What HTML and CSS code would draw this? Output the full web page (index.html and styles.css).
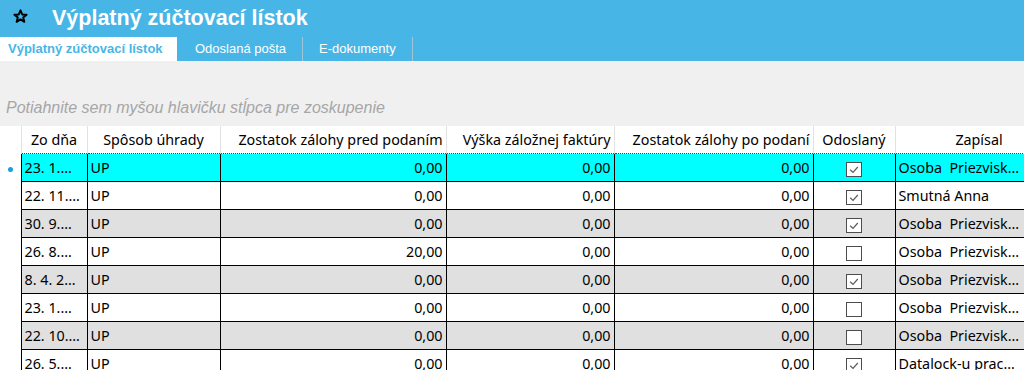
FILE: index.html
```html
<!DOCTYPE html>
<html lang="sk">
<head>
<meta charset="utf-8">
<title>Výplatný zúčtovací lístok</title>
<link rel="stylesheet" href="styles.css">
</head>
<body>
<div class="titlebar">
  <svg class="star" width="15" height="15" viewBox="0 0 14 14"><path d="M7 1.2 L8.6 5.1 L12.7 5.3 L9.5 7.9 L10.6 12 L7 9.7 L3.4 12 L4.5 7.9 L1.3 5.3 L5.4 5.1 Z" fill="none" stroke="#000" stroke-width="1.8" stroke-linejoin="round"/></svg>
  <h1 class="title">Výplatný zúčtovací lístok</h1>
</div>
<div class="tabs">
  <div class="tab active">Výplatný zúčtovací lístok</div>
  <div class="tab">Odoslaná pošta</div>
  <div class="tab">E-dokumenty</div>
</div>
<div class="grouparea">
  <div class="grouphint">Potiahnite sem myšou hlavičku stĺpca pre zoskupenie</div>
</div>
<table class="grid">
  <colgroup>
    <col class="c0"><col class="c1"><col class="c2"><col class="c3"><col class="c4"><col class="c5"><col class="c6"><col class="c7">
  </colgroup>
  <thead>
    <tr>
      <th class="ind"></th>
      <th class="center">Zo dňa</th>
      <th class="center">Spôsob úhrady</th>
      <th class="right">Zostatok zálohy pred podaním</th>
      <th class="right">Výška záložnej faktúry</th>
      <th class="right">Zostatok zálohy po podaní</th>
      <th class="center">Odoslaný</th>
      <th class="center">Zapísal</th>
    </tr>
  </thead>
  <tbody>
    <tr class="sel">
      <td class="ind"><span class="dot"></span></td>
      <td>23. 1.…</td><td>UP</td><td class="num">0,00</td><td class="num">0,00</td><td class="num">0,00</td>
      <td class="chk"><span class="box"><svg width="14" height="13" viewBox="0 0 14 13"><path d="M3.2 6.8 L6 9.4 L10.8 4" fill="none" stroke="#5a5a5a" stroke-width="1.2"/></svg></span></td><td>Osoba&nbsp; Priezvisk…</td>
    </tr>
    <tr>
      <td class="ind"></td>
      <td>22. 11.…</td><td>UP</td><td class="num">0,00</td><td class="num">0,00</td><td class="num">0,00</td>
      <td class="chk"><span class="box"><svg width="14" height="13" viewBox="0 0 14 13"><path d="M3.2 6.8 L6 9.4 L10.8 4" fill="none" stroke="#5a5a5a" stroke-width="1.2"/></svg></span></td><td>Smutná Anna</td>
    </tr>
    <tr class="alt">
      <td class="ind"></td>
      <td>30. 9.…</td><td>UP</td><td class="num">0,00</td><td class="num">0,00</td><td class="num">0,00</td>
      <td class="chk"><span class="box"><svg width="14" height="13" viewBox="0 0 14 13"><path d="M3.2 6.8 L6 9.4 L10.8 4" fill="none" stroke="#5a5a5a" stroke-width="1.2"/></svg></span></td><td>Osoba&nbsp; Priezvisk…</td>
    </tr>
    <tr>
      <td class="ind"></td>
      <td>26. 8.…</td><td>UP</td><td class="num">20,00</td><td class="num">0,00</td><td class="num">0,00</td>
      <td class="chk"><span class="box"></span></td><td>Osoba&nbsp; Priezvisk…</td>
    </tr>
    <tr class="alt">
      <td class="ind"></td>
      <td>8. 4. 2…</td><td>UP</td><td class="num">0,00</td><td class="num">0,00</td><td class="num">0,00</td>
      <td class="chk"><span class="box"><svg width="14" height="13" viewBox="0 0 14 13"><path d="M3.2 6.8 L6 9.4 L10.8 4" fill="none" stroke="#5a5a5a" stroke-width="1.2"/></svg></span></td><td>Osoba&nbsp; Priezvisk…</td>
    </tr>
    <tr>
      <td class="ind"></td>
      <td>23. 1.…</td><td>UP</td><td class="num">0,00</td><td class="num">0,00</td><td class="num">0,00</td>
      <td class="chk"><span class="box"></span></td><td>Osoba&nbsp; Priezvisk…</td>
    </tr>
    <tr class="alt">
      <td class="ind"></td>
      <td>22. 10.…</td><td>UP</td><td class="num">0,00</td><td class="num">0,00</td><td class="num">0,00</td>
      <td class="chk"><span class="box"></span></td><td>Osoba&nbsp; Priezvisk…</td>
    </tr>
    <tr>
      <td class="ind"></td>
      <td>26. 5.…</td><td>UP</td><td class="num">0,00</td><td class="num">0,00</td><td class="num">0,00</td>
      <td class="chk"><span class="box"><svg width="14" height="13" viewBox="0 0 14 13"><path d="M3.2 6.8 L6 9.4 L10.8 4" fill="none" stroke="#5a5a5a" stroke-width="1.2"/></svg></span></td><td>Datalock-u prac…</td>
    </tr>
  </tbody>
</table>
</body>
</html>
```
FILE: styles.css
```css
html, body {
  margin: 0;
  padding: 0;
  background: #ffffff;
  overflow: hidden;
  width: 1024px;
  height: 370px;
}
body {
  font-family: "Noto Sans", "DejaVu Sans", sans-serif;
}
.titlebar {
  height: 36px;
  background: #47b6e7;
  display: flex;
  align-items: center;
}
.star {
  margin-left: 13px;
  margin-top: -4px;
}
.title {
  margin: 0 0 0 24px;
  font-family: "Liberation Sans", "Arial", sans-serif;
  font-weight: bold;
  font-size: 21.5px;
  color: #ffffff;
  line-height: 36px;
}
.tabs {
  height: 25px;
  background: #47b6e7;
  display: flex;
  font-family: "Liberation Sans", "Arial", sans-serif;
  font-size: 13px;
  color: #ffffff;
}
.tab {
  height: 24px;
  margin-top: 1px;
  line-height: 24px;
  padding: 0 16px;
  white-space: nowrap;
  border-right: 1px solid #9fc6d8;
}
.tab.active {
  box-sizing: border-box;
  background: #ffffff;
  color: #47b6e7;
  font-weight: bold;
  padding: 0 0 0 8px;
  border-right: none;
  width: 177px;
}
.tab.active + .tab {
  padding-left: 18px;
  padding-right: 16px;
}
.grouparea {
  height: 65px;
  background: #f0f0f0;
  display: flex;
  align-items: flex-end;
}
.grouphint {
  font-family: "Liberation Sans", sans-serif;
  font-style: italic;
  font-size: 16px;
  color: #a6a6a6;
  padding: 0 0 9px 6px;
}
.grid {
  border-collapse: collapse;
  table-layout: fixed;
  width: 1063px;
  font-size: 14.3px;
  color: #000000;
}
.c0 { width: 21px; }
.c1 { width: 66px; }
.c2 { width: 133px; }
.c3 { width: 226px; }
.c4 { width: 168px; }
.c5 { width: 199px; }
.c6 { width: 82px; }
.c7 { width: 168px; }
.grid th {
  height: 27px;
  padding: 0 3px;
  font-weight: normal;
  background: #ffffff;
  border-right: 1px solid #e2e2e2;
  white-space: nowrap;
  overflow: hidden;
}
.center { text-align: center; }
.right { text-align: right; }
.grid td {
  height: 27px;
  padding: 0 3px;
  border: 1px solid #000000;
  white-space: nowrap;
  overflow: hidden;
}
.grid td.ind {
  border-top: none;
  border-bottom: none;
  border-left: none;
  background: #ffffff;
  padding: 0;
  text-align: center;
}
.grid td.num { text-align: right; }
.grid td.chk { text-align: center; padding: 0; }
.alt td { background: #e0e0e0; }
.sel td { background: #00ffff; border-top: 1px dotted #d00000; border-bottom: 1px dotted #d00000; }
.sel td.ind { background: #ffffff; border-top: none; border-bottom: none; }
.dot {
  display: inline-block;
  width: 5px;
  height: 5px;
  border-radius: 50%;
  background: #1a9fdc;
  vertical-align: middle;
}
.box {
  display: inline-block;
  width: 14px;
  height: 13px;
  border: 1px solid #4d4d4d;
  background: #ffffff;
  vertical-align: middle;
}
.box svg {
  display: block;
}
```
